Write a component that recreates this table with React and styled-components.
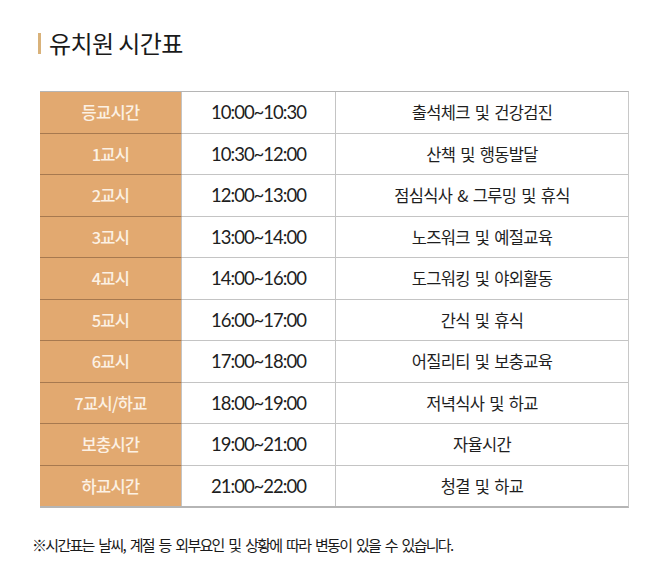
import React from 'react';
import styled, { createGlobalStyle } from 'styled-components';

const GlobalStyle = createGlobalStyle`
  body {
    margin: 0;
    background: #fff;
    font-family: 'Noto Sans CJK KR', 'Noto Sans', sans-serif;
    color: #222;
  }
`;

const Page = styled.div`
  width: 658px;
  height: 585px;
  padding: 29px 30px 0 38px;
  box-sizing: border-box;
`;

const Title = styled.h2`
  display: flex;
  align-items: center;
  gap: 8px;
  margin: 0;
  font-size: 24px;
  font-weight: 400;
  line-height: 28px;
  letter-spacing: -0.6px;
  color: #1a1a1a;

  &::before {
    content: '';
    width: 3px;
    height: 21px;
    background: #d9b27a;
  }
`;

const Table = styled.div`
  display: grid;
  grid-template-columns: 142px 154px 292px;
  margin: 34px 0 0 2px;
  width: 588px;
  border-top: 1px solid #b5b5b5;
  border-bottom: 2px solid #b5b5b5;
  border-right: 1px solid #c8c8c8;
`;

const Cell = styled.div`
  height: 40.5px;
  display: flex;
  align-items: center;
  justify-content: center;
  font-size: 16.5px;
  letter-spacing: -0.7px;
  word-spacing: 2px;
  font-weight: ${(p) => (p.head ? 500 : 400)};
  border-top: ${(p) => (p.first ? 'none' : '1px solid')};
  border-top-color: ${(p) => (p.head ? '#a7794f' : '#c4c4c4')};
  border-right: ${(p) => (p.last ? 'none' : '1px solid #c4c4c4')};
  background: ${(p) => (p.head ? '#e2a970' : '#fff')};
  color: ${(p) => (p.head ? '#fcf1e4' : '#1e1e1e')};
`;

const Time = styled(Cell)`
  font-family: 'Lato', 'Noto Sans', sans-serif;
  font-size: 18.5px;
  letter-spacing: -1px;
  word-spacing: 0;
`;

const Note = styled.p`
  margin: 26px 0 0 -6px;
  font-size: 15px;
  letter-spacing: -1.7px;
  word-spacing: 3px;
  color: #1a1a1a;
`;

const rows = [
  ['등교시간', '10:00~10:30', '출석체크 및 건강검진'],
  ['1교시', '10:30~12:00', '산책 및 행동발달'],
  ['2교시', '12:00~13:00', '점심식사 & 그루밍 및 휴식'],
  ['3교시', '13:00~14:00', '노즈워크 및 예절교육'],
  ['4교시', '14:00~16:00', '도그워킹 및 야외활동'],
  ['5교시', '16:00~17:00', '간식 및 휴식'],
  ['6교시', '17:00~18:00', '어질리티 및 보충교육'],
  ['7교시/하교', '18:00~19:00', '저녁식사 및 하교'],
  ['보충시간', '19:00~21:00', '자율시간'],
  ['하교시간', '21:00~22:00', '청결 및 하교'],
];

const App = () => (
  <Page>
    <GlobalStyle />
    <Title>유치원 시간표</Title>
    <Table>
      {rows.map(([period, time, activity], i) => (
        <React.Fragment key={period}>
          <Cell head first={i === 0}>{period}</Cell>
          <Time first={i === 0}>{time}</Time>
          <Cell first={i === 0} last>{activity}</Cell>
        </React.Fragment>
      ))}
    </Table>
    <Note>※시간표는 날씨, 계절 등 외부요인 및 상황에 따라 변동이 있을 수 있습니다.</Note>
  </Page>
);

export default App;
